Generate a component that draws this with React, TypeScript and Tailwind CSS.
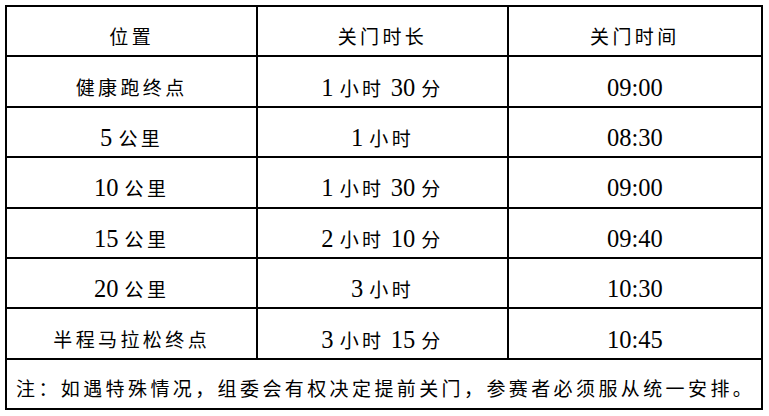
import React from "react";

const rows: [string, string, string][] = [
  ["健康跑终点", "1 小时 30 分", "09:00"],
  ["5 公里", "1 小时", "08:30"],
  ["10 公里", "1 小时 30 分", "09:00"],
  ["15 公里", "2 小时 10 分", "09:40"],
  ["20 公里", "3 小时", "10:30"],
  ["半程马拉松终点", "3 小时 15 分", "10:45"],
];

function Mixed({ text }: { text: string }) {
  const parts = text.match(/[0-9: ]+|[^0-9: ]+/g) ?? [];
  return (
    <>
      {parts.map((p, i) =>
        /[0-9: ]/.test(p[0]) ? (
          <span key={i} className="text-[24.5px] tracking-normal whitespace-pre">{p}</span>
        ) : (
          <span key={i}>{p}</span>
        )
      )}
    </>
  );
}

const cell = "border-2 border-black text-center align-middle pt-[14px] leading-[28px]";

export default function App() {
  return (
    <div className="w-[769px] h-[416px] bg-white pl-[5px] pt-[5px] font-['Liberation_Serif','Noto_Sans_CJK_SC',serif]">
      <table className="border-collapse w-[758px] text-[19px] tracking-[3.4px] text-black font-['Liberation_Serif','Noto_Sans_CJK_SC',serif]">
        <colgroup>
          <col className="w-[252px]" />
          <col className="w-[251px]" />
          <col className="w-[255px]" />
        </colgroup>
        <tbody>
          <tr className="h-[50.4px]">
            <td className={cell}>位置</td>
            <td className={cell}>关门时长</td>
            <td className={cell}>关门时间</td>
          </tr>
          {rows.map((r, i) => (
            <tr key={i} className="h-[50.4px]">
              {r.map((c, j) => (
                <td key={j} className={cell}>
                  <Mixed text={c} />
                </td>
              ))}
            </tr>
          ))}
          <tr className="h-[50.4px]">
            <td colSpan={3} className="border-2 border-black text-left align-middle pt-[12px] pl-[9px] whitespace-nowrap leading-[28px]">
              注：如遇特殊情况，组委会有权决定提前关门，参赛者必须服从统一安排。
            </td>
          </tr>
        </tbody>
      </table>
    </div>
  );
}
